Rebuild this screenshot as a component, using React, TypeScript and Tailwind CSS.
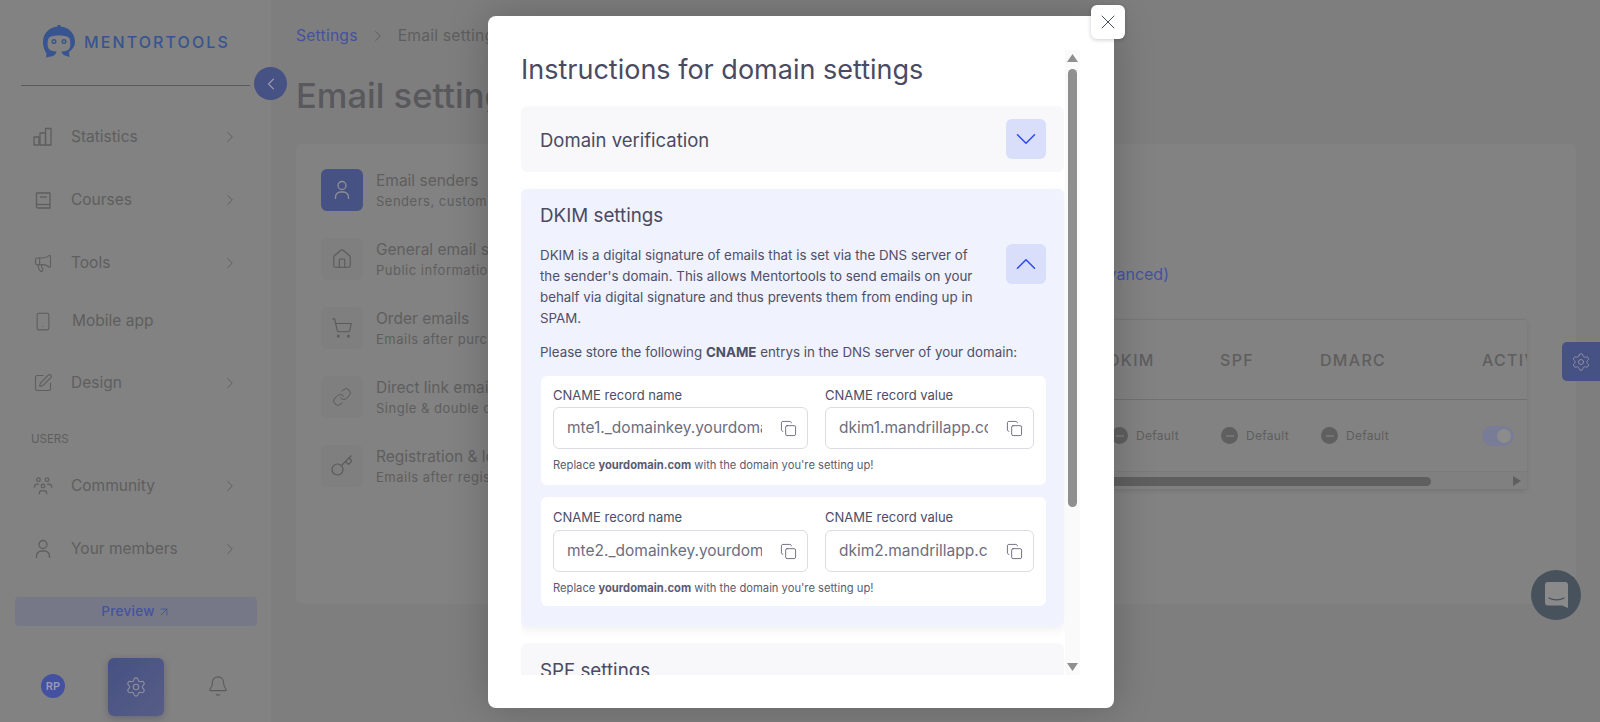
import React from "react";
import { ChevronRight, ChevronLeft, ChevronDown, ChevronUp, Megaphone, Smartphone, SquarePen, Settings, Bell, House, ShoppingCart, Link as LinkIcon, Key, Copy, X, ArrowUpRight, Minus } from "lucide-react";

const BarsIcon = () => (
  <svg width="20" height="20" viewBox="0 0 20 20" fill="none" stroke="currentColor" strokeWidth="1.3" strokeLinejoin="round"><rect x="1" y="10" width="5" height="8" /><rect x="7" y="6" width="5.5" height="12" /><rect x="12.5" y="1.5" width="5.5" height="16.5" /></svg>
);
const BookIcon = () => (
  <svg width="20" height="20" viewBox="0 0 20 20" fill="none" stroke="currentColor" strokeWidth="1.3" strokeLinejoin="round"><path d="M3.500 3h13.500v15H5a1.500 1.500 0 0 1-1.500-1.500z" /><path d="M3.500 14.500H17" /><path d="M7 7h7" /></svg>
);
const UserIcon = ({ size = 20 }: { size?: number }) => (
  <svg width={size} height={size} viewBox="0 0 20 20" fill="none" stroke="currentColor" strokeWidth="1.3"><circle cx="10" cy="5.500" r="4" /><path d="M3.500 19v-2a5 5 0 0 1 5-5h3a5 5 0 0 1 5 5v2" /></svg>
);
const CommunityIcon = () => (
  <svg width="22" height="22" viewBox="0 0 22 22" fill="none" stroke="currentColor" strokeWidth="1.300"><circle cx="6" cy="4" r="2" /><circle cx="15.500" cy="4" r="2" /><circle cx="11" cy="11" r="2" /><path d="M1.500 13v-1a3 3 0 0 1 3-3h2" /><path d="M20.500 13v-1a3 3 0 0 0-3-3h-2" /><path d="M7 20v-1a3 3 0 0 1 3-3h2a3 3 0 0 1 3 3v1" /></svg>
);
const Logo = () => (
  <svg width="34" height="34" viewBox="0 0 34 34" className="text-[#385490]" fill="currentColor">
    <rect x="15.500" y="0" width="3" height="4" />
    <path fillRule="evenodd" d="M17 1.500C7.500 1.500 1 8 1 17c0 5 2 9.500 3.500 11.500L4 32.500l7-1.500c2-1 3-2.500 3.500-4.500-3.500 0-7-1-8-3-1.200-2-1.200-7.500 0-10 1-2 4-3 10.500-3s9.500 1 10.500 3c1.200 2.500 1.200 8 0 10-1 2-4.500 3-8 3 .5 2 1.500 3.500 3.500 4l4.500 1.500L27 27c3.500-2.500 6-6 6-10 0-9-6.500-15.500-16-15.500z" />
    <circle cx="12" cy="16.500" r="1.800" fill="none" stroke="currentColor" strokeWidth="1.400" />
    <circle cx="22" cy="16.500" r="1.800" fill="none" stroke="currentColor" strokeWidth="1.400" />
  </svg>
);

const NavRow = ({ icon, label, chevron = true, h = "h-[63px]", gap = "ml-[18px]" }: { icon: React.ReactNode; label: string; chevron?: boolean; h?: string; gap?: string }) => (
  <div className={`flex ${h} items-center pl-[33px] pr-[32px] text-[#5e5e5e]`}>
    <span className="flex w-[20px] justify-center">{icon}</span>
    <span className={`${gap} flex-1 text-[15.500px]`}>{label}</span>
    {chevron && <ChevronRight size={18} strokeWidth={1.3} />}
  </div>
);

const SubItem = ({ icon, title, sub, active = false }: { icon: React.ReactNode; title: string; sub: string; active?: boolean }) => (
  <div className="flex h-[42px] items-center">
    <div className={`flex h-[42px] w-[42px] items-center justify-center rounded-[6px] ${active ? "bg-[#465184] text-[#8f8f95]" : "bg-[#7f7f7f] text-[#5a5a5a]"}`}>{icon}</div>
    <div className="ml-[13px] mt-[2px] whitespace-nowrap">
      <div className="text-[15.500px] leading-[21px] text-[#5e5e5e]">{title}</div>
      <div className="text-[13px] leading-[21px] tracking-[0.5px] text-[#5e5e5e]">{sub}</div>
    </div>
  </div>
);

const Status = () => (
  <div className="flex items-center text-[12px] tracking-[0.3px] text-[#5e5e5e]">
    <span className="flex h-[17px] w-[17px] items-center justify-center rounded-full bg-[#5f5f5f] text-[#8a8a8a]"><Minus size={12} /></span>
    <span className="ml-[8px]">Default</span>
  </div>
);

const CopyField = ({ label, value, w, mb }: { label: string; value: string; w: string; mb: string }) => (
  <div className={w}>
    <div className={`${mb} text-[13px] leading-[16px] text-[#4d4d66]`}>{label}</div>
    <div className="flex h-[42px] items-center rounded-[6px] border border-[#dcdce3] pl-[13px] pr-[10px]">
      <span className="min-w-0 flex-1 overflow-hidden whitespace-nowrap text-[15.500px] text-[#6d6d80]">{value}</span>
      <Copy size={17} strokeWidth={1.2} className="ml-[18px] text-[#5a5a70]" />
    </div>
  </div>
);

const RecordCard = ({ a, b, second = false }: { a: string; b: string; second?: boolean }) => (
  <div className={`h-[109px] rounded-[6px] bg-white px-[12px] ${second ? "pt-[12px]" : "pt-[11px]"}`}>
    <div className="flex gap-[17px]">
      <CopyField label="CNAME record name" value={a} w="w-[255px]" mb={second ? "mb-[5px]" : "mb-[4px]"} />
      <CopyField label="CNAME record value" value={b} w="w-[209px]" mb={second ? "mb-[5px]" : "mb-[4px]"} />
    </div>
    <div className="mt-[8px] whitespace-nowrap text-[11.200px] leading-[16px] text-[#5b5b72]">Replace <b>yourdomain.com</b> with the domain you're setting up!</div>
  </div>
);

const ToggleBtn = ({ up = false }: { up?: boolean }) => (
  <button className="flex h-[40px] w-[40px] shrink-0 items-center justify-center rounded-[6px] bg-[#d9defa] text-[#2f4bf0]">
    {up ? <ChevronUp size={34} strokeWidth={1.1} /> : <ChevronDown size={34} strokeWidth={1.1} />}
  </button>
);

export default function App() {
  return (
    <div className="relative flex h-[722px] w-[1600px] overflow-hidden bg-[#7e7e7e] [font-family:Inter,sans-serif]">
      {/* Sidebar */}
      <aside className="relative flex h-full w-[271px] shrink-0 flex-col bg-[#828282]">
        <div className="ml-[42px] mt-[25px] flex h-[34px] items-center">
          <Logo />
          <span className="ml-[8px] text-[16px] font-medium tracking-[2.100px] text-[#385490]">MENTORTOOLS</span>
        </div>
        <div className="ml-[21px] mt-[26px] h-px w-[229px] bg-[#5a5a5a]" />
        <div className="absolute left-[254px] top-[67px] flex h-[33px] w-[33px] items-center justify-center rounded-full bg-[#465184] text-[#9a9ab0]"><ChevronLeft size={20} strokeWidth={1.3} /></div>
        <nav className="mt-[19px]">
          <NavRow icon={<BarsIcon />} label="Statistics" />
          <NavRow icon={<BookIcon />} label="Courses" />
          <NavRow icon={<Megaphone size={20} strokeWidth={1.3} />} label="Tools" />
          <NavRow icon={<Smartphone size={21} strokeWidth={1.3} />} label="Mobile app" chevron={false} h="h-[54px]" gap="ml-[19px]" />
          <div className="mt-[3px]"><NavRow icon={<SquarePen size={20} strokeWidth={1.3} />} label="Design" /></div>
          <div className="mt-[18px] pl-[31px] text-[11.500px] leading-[14px] text-[#5e5e5e]">USERS</div>
          <div className="mt-[8px]">
            <NavRow icon={<CommunityIcon />} label="Community" />
            <NavRow icon={<UserIcon />} label="Your members" />
          </div>
        </nav>
        <div className="mx-[15px] mt-[17px] flex h-[29px] w-[242px] items-center justify-center rounded-[4px] bg-[#767888] text-[13.500px] font-medium tracking-[0.3px] text-[#4452a0]">
          Preview<ArrowUpRight size={14} strokeWidth={1.5} className="ml-[2px]" />
        </div>
        <div className="mt-[32px] flex items-start text-[#5a5a5a]">
          <div className="ml-[41px] mt-[16px] flex h-[24px] w-[24px] items-center justify-center rounded-full bg-[#4450a0] text-[11px] font-semibold text-[#9a9ab5]">RP</div>
          <div className="ml-[43px] flex h-[58px] w-[56px] items-center justify-center rounded-[6px] bg-gradient-to-br from-[#465184] to-[#565d85] text-[#8f8f9f] shadow-[0_2px_6px_rgba(60,60,90,0.4)]"><Settings size={22} strokeWidth={1.2} /></div>
          <Bell size={22} strokeWidth={1.2} className="ml-[43px] mt-[17px]" />
        </div>
      </aside>

      {/* Main */}
      <main className="relative flex-1 pl-[25px]">
        <div className="mt-[25px] flex h-[21px] items-center text-[15.700px] tracking-[0.2px]">
          <span className="text-[#4452a0]">Settings</span>
          <ChevronRight size={18} strokeWidth={1.3} className="ml-[11px] text-[#5a5a5a]" />
          <span className="ml-[11px] whitespace-nowrap text-[#5e5e5e]">Email settings</span>
        </div>
        <h1 className="mt-[26px] text-[34.500px] font-medium leading-[48px] text-[#58585d]">Email settings</h1>
        <section className="mt-[24px] flex h-[460px] w-[1280px] rounded-[6px] bg-[#828282]">
          <div className="ml-[25px] mt-[25px] flex w-[476px] shrink-0 flex-col gap-[27px] overflow-hidden">
            <SubItem active icon={<UserIcon />} title="Email senders" sub="Senders, custom domains" />
            <SubItem icon={<House size={22} strokeWidth={1.2} />} title="General email settings" sub="Public information" />
            <SubItem icon={<ShoppingCart size={22} strokeWidth={1.2} />} title="Order emails" sub="Emails after purchase" />
            <SubItem icon={<LinkIcon size={20} strokeWidth={1.2} />} title="Direct link emails" sub="Single & double confirmation" />
            <SubItem icon={<Key size={24} strokeWidth={1.2} />} title="Registration & login" sub="Emails after registration" />
          </div>
          <div className="w-[730px] shrink-0">
            <div className="mt-[119px] flex w-[372px] justify-end whitespace-nowrap text-[16px] leading-[22px] text-[#4452a0]">Domain settings (advanced)</div>
            <div className="mt-[34px] h-[170px] overflow-hidden rounded-[4px] border-t border-[#787878] bg-[#828282] shadow-[0_2px_4px_rgba(0,0,0,0.1)]">
              <div className="flex h-[80px] items-center whitespace-nowrap border-b border-[#707070] pl-[311px] text-[16px] font-medium tracking-[1.300px] text-[#5e5e5e]">
                <span className="w-[112px] shrink-0">DKIM</span><span className="w-[100px] shrink-0">SPF</span><span className="w-[162px] shrink-0">DMARC</span><span className="shrink-0">ACTIVE</span>
              </div>
              <div className="flex h-[71px] items-center pl-[314px]">
                <div className="w-[110px] shrink-0"><Status /></div>
                <div className="w-[100px] shrink-0"><Status /></div>
                <div className="w-[161px] shrink-0"><Status /></div>
                <div className="relative h-[20px] w-[32px] shrink-0 rounded-full bg-[#797c96]"><span className="absolute right-[3px] top-[3px] h-[14px] w-[14px] rounded-full bg-[#8c8c8c]" /></div>
              </div>
              <div className="flex h-[19px] items-center border-t border-[#7b7b7b] bg-[#808080]">
                <div className="ml-[200px] h-[9px] w-[434px] rounded-full bg-[#5f5f5f]" />
                <svg width="8" height="10" viewBox="0 0 8 10" className="ml-[82px] text-[#5f5f5f]"><path d="M0 0l8 5-8 5z" fill="currentColor" /></svg>
              </div>
            </div>
          </div>
        </section>
      </main>

      {/* Floating widgets */}
      <div className="absolute left-[1562px] top-[342px] flex h-[39px] w-[38px] items-center justify-center rounded-l-[5px] bg-[#465184] text-[#8f8f9f]"><Settings size={20} strokeWidth={1.2} /></div>
      <div className="absolute left-[1531px] top-[570px] flex h-[50px] w-[50px] items-center justify-center rounded-full bg-[#47525d]">
        <svg width="23" height="26" viewBox="0 0 23 26" className="text-[#8a8a8a]"><path d="M3 0h17a3 3 0 0 1 3 3v23l-6-2.500H3a3 3 0 0 1-3-3V3a3 3 0 0 1 3-3z" fill="currentColor" /><path d="M4 16c4 2.500 11 2.500 15 0" stroke="#47525d" strokeWidth="1.400" fill="none" strokeLinecap="round" /></svg>
      </div>

      {/* Modal */}
      <div className="absolute left-[488px] top-[16px] h-[692px] w-[626px] rounded-[8px] bg-white shadow-[0_0_40px_rgba(0,0,0,0.22)]">
        <button className="absolute left-[603px] top-[-11px] z-10 flex h-[34px] w-[34px] items-center justify-center rounded-[6px] bg-white text-[#4a4a5e] shadow-[0_1px_4px_rgba(0,0,0,0.2)]"><X size={24} strokeWidth={1} /></button>
        <div className="relative ml-[33px] mt-[34px] h-[625px] w-[559px] overflow-hidden">
          <div className="w-[543px]">
            <h2 className="flex h-[38px] items-center whitespace-nowrap pt-[2px] text-[27px] leading-[38px] text-[#4a4a62]">Instructions for domain settings</h2>
            <div className="h-[18px]" />
            <div className="flex h-[66px] items-center justify-between rounded-[6px] bg-[#f8f8fb] pl-[19px] pr-[18px]">
              <span className="mt-[3px] text-[18.500px] text-[#4a4a62]">Domain verification</span>
              <ToggleBtn />
            </div>
            <div className="mt-[17px] h-[437px] rounded-[6px] bg-[#f0f2fd] pl-[19px] pr-[18px] pt-[15px] shadow-[0_4px_10px_rgba(60,60,120,0.08)]">
              <div className="text-[18.800px] leading-[24px] text-[#4a4a62]">DKIM settings</div>
              <div className="mt-[17px] flex items-start justify-between">
                <p className="w-[441px] text-[13.350px] leading-[21px] text-[#4f4f68]">DKIM is a digital signature of emails that is set via the DNS server of the sender's domain. This allows Mentortools to send emails on your behalf via digital signature and thus prevents them from ending up in SPAM.</p>
                <div className="mt-[-1px]"><ToggleBtn up /></div>
              </div>
              <p className="mt-[13px] text-[13.350px] leading-[21px] text-[#4f4f68]">Please store the following <b>CNAME</b> entrys in the DNS server of your domain:</p>
              <div className="ml-[1px] mt-[13px] flex flex-col gap-[12px]">
                <RecordCard a="mte1._domainkey.yourdomain.com" b="dkim1.mandrillapp.com" />
                <RecordCard second a="mte2._domainkey.yourdomain.com" b="dkim2.mandrillapp.com" />
              </div>
            </div>
            <div className="relative mt-[17px] h-[66px] rounded-[6px] bg-[#f8f8fb] pl-[19px] pt-[16px]">
              <span className="text-[18.800px] leading-[24px] text-[#4a4a62]">SPF settings</span>
              <span className="absolute left-[132px] top-[31px] whitespace-nowrap text-[12.500px] leading-[14px] text-[#8a8a9c]">is a list of servers that may send emails on behalf of your domain</span>
            </div>
          </div>
          {/* Scrollbar */}
          <div className="absolute right-0 top-0 flex h-full w-[15px] flex-col items-center bg-[#fafafb] pt-[4px]">
            <svg width="11" height="8" viewBox="0 0 11 8" className="text-[#8f8f8f]"><path d="M5.500 0L11 8H0z" fill="currentColor" /></svg>
            <div className="mt-[7px] h-[438px] w-[9px] rounded-full bg-[#8f8f8f]" />
            <svg width="11" height="8" viewBox="0 0 11 8" className="mt-[156px] text-[#8f8f8f]"><path d="M0 0h11L5.500 8z" fill="currentColor" /></svg>
          </div>
        </div>
      </div>
    </div>
  );
}
